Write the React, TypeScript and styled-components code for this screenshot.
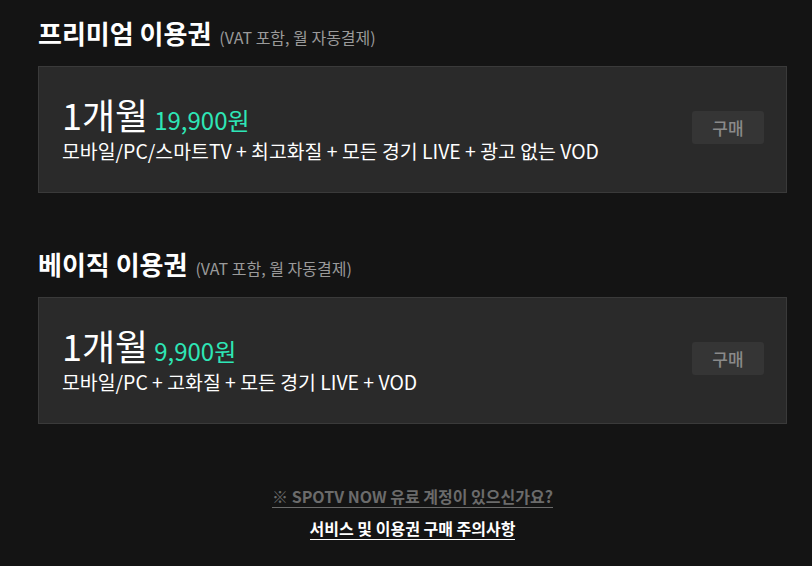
import React from "react";
import styled, { createGlobalStyle } from "styled-components";

const GlobalStyle = createGlobalStyle`
  html, body {
    margin: 0;
    padding: 0;
    background: #141414;
  }
  body {
    font-family: "Noto Sans CJK KR", "Noto Sans", sans-serif;
    color: #fff;
  }
`;

type Plan = {
  name: string;
  period: string;
  price: string;
  desc: string;
};

const plans: Plan[] = [
  {
    name: "프리미엄 이용권",
    period: "1개월",
    price: "19,900원",
    desc: "모바일/PC/스마트TV + 최고화질 + 모든 경기 LIVE + 광고 없는 VOD",
  },
  {
    name: "베이직 이용권",
    period: "1개월",
    price: "9,900원",
    desc: "모바일/PC + 고화질 + 모든 경기 LIVE + VOD",
  },
];

const App = () => {
  return (
    <>
      <GlobalStyle />
      <Page>
        {plans.map((plan) => (
          <Section key={plan.name}>
            <Heading>
              {plan.name}
              <Note>(VAT 포함, 월 자동결제)</Note>
            </Heading>
            <Card>
              <Info>
                <TitleRow>
                  <Period>{plan.period}</Period>
                  <Price>{plan.price}</Price>
                </TitleRow>
                <Desc>{plan.desc}</Desc>
              </Info>
              <BuyButton>구매</BuyButton>
            </Card>
          </Section>
        ))}
        <Footer>
          <FooterLink $muted>※ SPOTV NOW 유료 계정이 있으신가요?</FooterLink>
          <FooterLink>서비스 및 이용권 구매 주의사항</FooterLink>
        </Footer>
      </Page>
    </>
  );
};

const Page = styled.div`
  width: 749px;
  padding: 13px 0 0 38px;
  display: flex;
  flex-direction: column;
`;

const Section = styled.section`
  display: flex;
  flex-direction: column;
  margin-bottom: 51px;
`;

const Heading = styled.h2`
  margin: 0 0 13px;
  height: 40px;
  font-size: 26px;
  line-height: 40px;
  font-weight: 700;
  color: #fff;
  display: flex;
  align-items: baseline;
`;

const Note = styled.span`
  margin-left: 8px;
  font-size: 16px;
  line-height: 1;
  font-weight: 400;
  color: #9a9a9a;
`;

const Card = styled.div`
  box-sizing: border-box;
  height: 127px;
  padding: 0 22px 0 23px;
  background: #2a2a2a;
  border: 1px solid #3a3a3a;
  display: flex;
  align-items: center;
  justify-content: space-between;
`;

const Info = styled.div`
  display: flex;
  flex-direction: column;
  margin-top: -2px;
`;

const TitleRow = styled.div`
  display: flex;
  align-items: baseline;
  gap: 6px;
`;

const Period = styled.span`
  font-size: 36px;
  line-height: 44px;
  font-weight: 400;
  color: #fff;
`;

const Price = styled.span`
  font-size: 24px;
  font-weight: 400;
  color: #2ee6b6;
`;

const Desc = styled.p`
  margin: 0;
  font-size: 19.4px;
  line-height: 28px;
  color: #fff;
`;

const BuyButton = styled.button`
  width: 72px;
  height: 33px;
  border: 0;
  border-radius: 3px;
  background: #353535;
  color: #8a8a8a;
  font-family: inherit;
  font-size: 17px;
  font-weight: 500;
  cursor: pointer;
  margin-top: -4px;
`;

const Footer = styled.div`
  display: flex;
  flex-direction: column;
  align-items: center;
  gap: 9px;
  margin-top: 10px;
  width: 749px;
`;

const FooterLink = styled.a<{ $muted?: boolean }>`
  font-size: 16px;
  font-weight: 700;
  line-height: 22px;
  color: ${(p) => (p.$muted ? "#6b6b6b" : "#fff")};
  border-bottom: 1px solid ${(p) => (p.$muted ? "#6b6b6b" : "#fff")};
  cursor: pointer;
`;

export default App;
